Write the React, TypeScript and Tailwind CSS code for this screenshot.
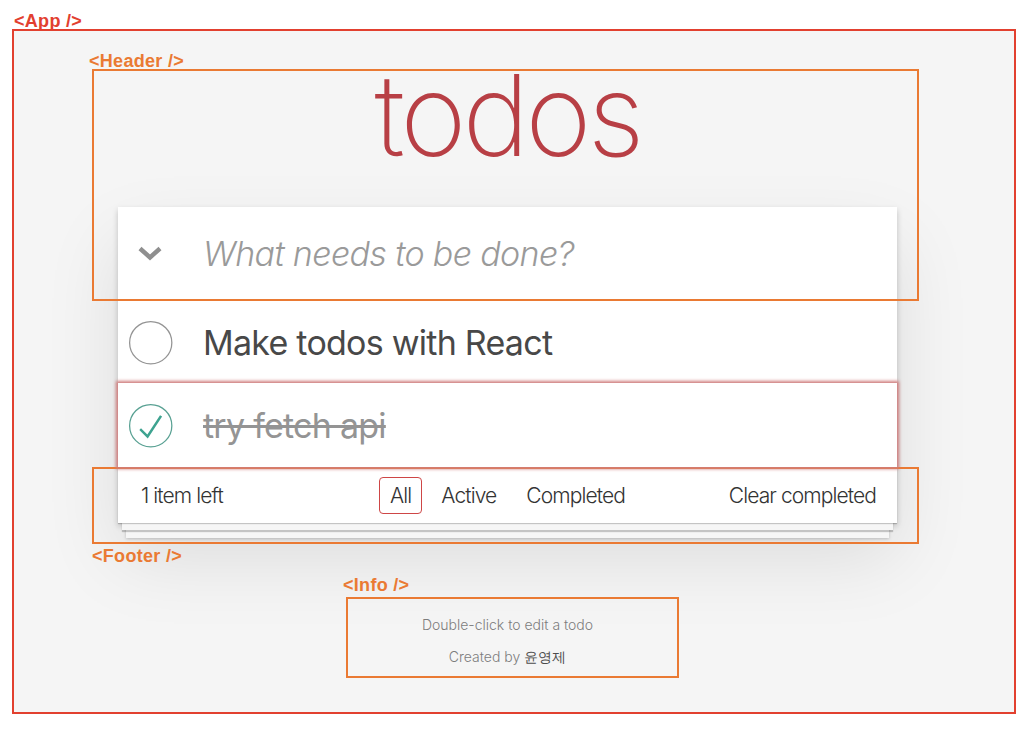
export default function App() {
  const orange = "border-[#ea7a33]";
  return (
    <div className="relative w-[1024px] h-[730px] bg-white overflow-hidden pt-[29px] pl-[12px] font-['Inter',sans-serif] font-light">
      <div className="w-[1004px] h-[685px] border-2 border-[#e2402f] bg-[#f5f5f5]">
        <section className="ml-[104px] w-[779px]">
          <h1 className="h-[176px] pt-[28px] text-center text-[113px] leading-none font-extralight text-[#b83f45] tracking-[-4px]">
            todos
          </h1>
          <div className="bg-white shadow-[0_3px_6px_0_rgba(0,0,0,0.2),0_35px_71px_0_rgba(0,0,0,0.1)]">
            <div className="h-[93px] flex items-center">
              <div className="w-[86px] pl-[20px] flex items-center">
                <svg width="24" height="15" viewBox="0 0 24 15">
                  <polyline points="2,2.5 12,11.5 22,2.5" fill="none" stroke="#8f8f8f" strokeWidth="4.4" strokeLinecap="butt" />
                </svg>
              </div>
              <span className="-ml-[1px] text-[34px] italic font-light text-[#9a9a9a] tracking-[-0.65px]">What needs to be done?</span>
            </div>
            <div className="h-[83px] border-t border-[#ededed] flex items-center">
              <div className="w-[86px] flex items-center">
                <svg width="57" height="57" viewBox="-10 -18 100 135">
                  <circle cx="50" cy="50" r="50" fill="none" stroke="#949494" strokeWidth="3" />
                </svg>
              </div>
              <span className="-ml-[1px] text-[34px] font-normal text-[#484848] tracking-[-0.75px]">Make todos with React</span>
            </div>
            <div className="relative z-10 h-[84px] flex items-center shadow-[0_0_3px_2px_#CF7D7D]">
              <div className="w-[86px] flex items-center">
                <svg width="57" height="57" viewBox="-10 -18 100 135">
                  <circle cx="50" cy="50" r="50" fill="none" stroke="#59A193" strokeWidth="3" />
                  <path fill="#3EA390" d="M72 25L42 71 27 56l-4 4 20 20 34-52z" />
                </svg>
              </div>
              <span className="-ml-[1px] text-[34px] font-normal text-[#949494] line-through tracking-[-0.75px]">try fetch api</span>
            </div>
            <div className="h-[56px] border-t border-[#e6e6e6] grid grid-cols-[1fr_auto_1fr] items-center px-[21px] text-[21px] text-[#333] tracking-[-0.9px] shadow-[0_1px_1px_rgba(0,0,0,0.2),0_11px_0_-4px_#f6f6f6,0_13px_1px_-4px_rgba(0,0,0,0.2),0_23px_0_-8px_#f6f6f6,0_24px_3px_-8px_rgba(0,0,0,0.2)]">
              <span className="pl-[2px]">1 item left</span>
              <ul className="flex">
                <li><a className="block mx-[4px] px-[10px] py-[2px] border-[1.5px] border-[#CE4646] rounded-[4px]">All</a></li>
                <li><a className="block mx-[4px] px-[10px] py-[2px] border-[1.5px] border-transparent rounded-[4px]">Active</a></li>
                <li><a className="block mx-[4px] px-[10px] py-[2px] border-[1.5px] border-transparent rounded-[4px]">Completed</a></li>
              </ul>
              <span className="text-right">Clear completed</span>
            </div>
          </div>
          <footer className="mt-[94px] text-center text-[14px] leading-[16px] text-[#7d7d7d] flex flex-col gap-[16px]">
            <p>Double-click to edit a todo</p>
            <p>
              Created by <a className="font-normal text-[#4d4d4d]">윤영제</a>
            </p>
          </footer>
        </section>
      </div>

      {/* annotation overlays */}
      <div className={`absolute left-[92px] top-[69px] w-[827px] h-[232px] border-2 ${orange}`} />
      <div className={`absolute left-[92px] top-[467px] w-[827px] h-[77px] border-2 ${orange}`} />
      <div className={`absolute left-[346px] top-[597px] w-[333px] h-[81px] border-2 ${orange}`} />
      <span className="absolute left-[14px] top-[8px] text-[18px] font-bold text-[#e2402f] font-['Liberation_Sans',sans-serif] tracking-[0.3px]">&lt;App /&gt;</span>
      <span className="absolute left-[89px] top-[48px] text-[18px] font-bold text-[#ea7a33] font-['Liberation_Sans',sans-serif] tracking-[0.3px]">&lt;Header /&gt;</span>
      <span className="absolute left-[92px] top-[543px] text-[18px] font-bold text-[#ea7a33] font-['Liberation_Sans',sans-serif] tracking-[0.3px]">&lt;Footer /&gt;</span>
      <span className="absolute left-[343px] top-[572px] text-[18px] font-bold text-[#ea7a33] font-['Liberation_Sans',sans-serif] tracking-[0.3px]">&lt;Info /&gt;</span>
    </div>
  );
}
